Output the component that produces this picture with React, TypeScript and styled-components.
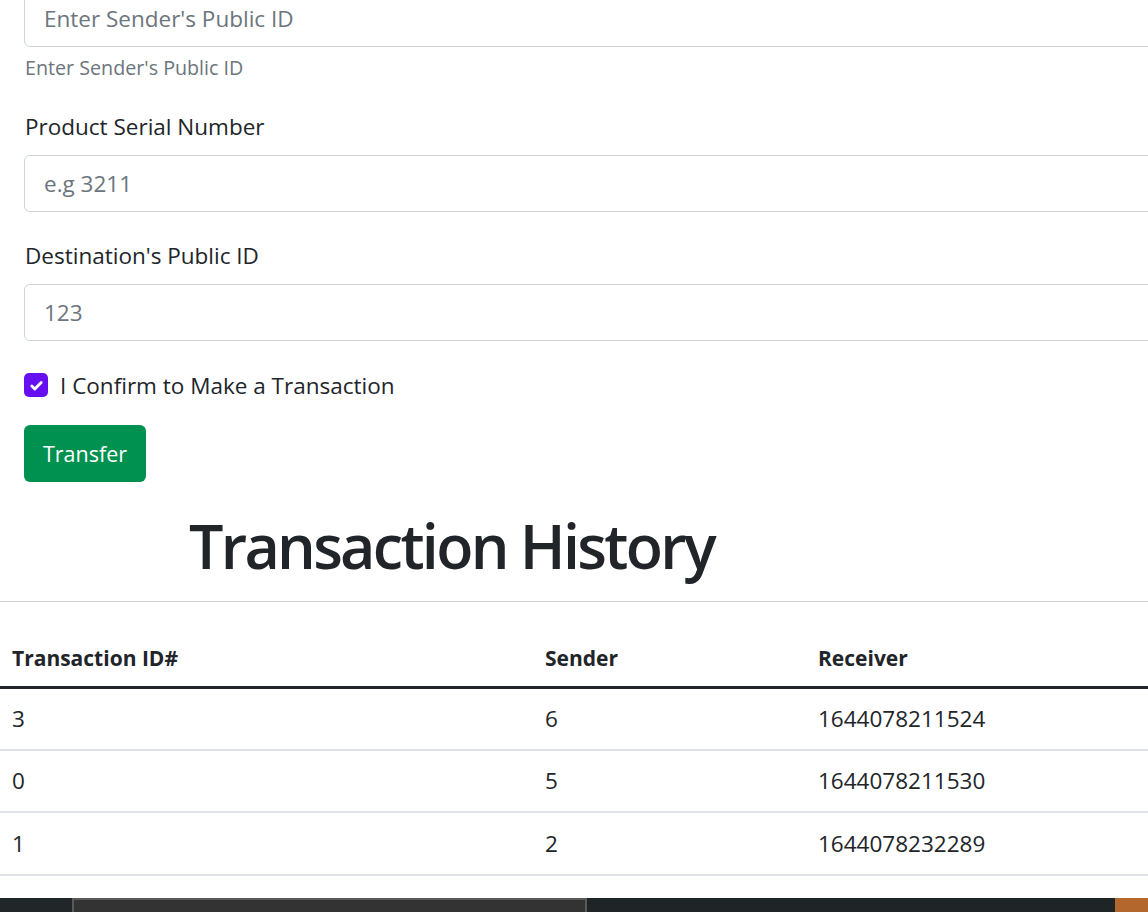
import React from "react";
import styled, { createGlobalStyle } from "styled-components";

const GlobalStyle = createGlobalStyle`
  html, body {
    margin: 0;
    padding: 0;
    background: #ffffff;
    overflow: hidden;
  }
  body {
    font-family: "Open Sans", "Noto Sans", sans-serif;
    color: #212529;
  }
  * { box-sizing: border-box; }
`;

const Page = styled.div`
  width: 1148px;
  height: 912px;
  overflow: hidden;
  display: flex;
  flex-direction: column;
`;

const Content = styled.div`
  flex: 1;
  display: flex;
  flex-direction: column;
  margin-top: -10px;
`;

const Form = styled.form`
  display: flex;
  flex-direction: column;
  padding-left: 24px;
  width: 1400px;
`;

const Group = styled.div<{ $gapTop?: number }>`
  display: flex;
  flex-direction: column;
  margin-top: ${(p) => p.$gapTop ?? 0}px;
`;

const Label = styled.label`
  display: block;
  height: 30px;
  line-height: 30px;
  font-size: 22.5px;
  padding-left: 1px;
  margin-bottom: 13px;
  color: #212529;
`;

const Input = styled.input`
  height: 57px;
  width: 100%;
  border: 1px solid #ced4da;
  border-radius: 6px;
  padding: 0 19px;
  font-family: inherit;
  font-size: 22.5px;
  color: #212529;
  background: #fff;
  outline: none;
  &::placeholder {
    color: #6c757d;
    opacity: 1;
  }
`;

const Help = styled.div`
  margin-top: 8px;
  height: 26px;
  line-height: 26px;
  font-size: 19.7px;
  color: #6c757d;
  padding-left: 1px;
`;

const CheckRow = styled.label`
  display: flex;
  align-items: center;
  gap: 12px;
  height: 30px;
  margin-top: 29px;
  font-size: 22.5px;
  color: #212529;
`;

const CheckBox = styled.span`
  width: 24px;
  height: 24px;
  border-radius: 5px;
  background: #6610f2;
  display: flex;
  align-items: center;
  justify-content: center;
  flex: none;
`;

const Button = styled.button`
  margin-top: 25px;
  width: 122px;
  height: 57px;
  border: none;
  border-radius: 6px;
  background: #009150;
  color: #ffffff;
  font-family: inherit;
  font-size: 21.5px;
  padding: 0;
  align-self: flex-start;
`;

const Title = styled.h1`
  margin: 28px 0 0;
  padding-left: 189px;
  font-size: 61px;
  font-weight: 600;
  letter-spacing: -2.7px;
  line-height: 72px;
  color: #212529;
  height: 72px;
  white-space: nowrap;
`;

const Rule = styled.hr`
  margin: 19px 0 0;
  border: none;
  border-top: 1px solid #cfcfcf;
  width: 100%;
`;

const Table = styled.table`
  margin-top: 29px;
  width: 1400px;
  border-collapse: collapse;
  table-layout: fixed;
  font-size: 22.5px;
`;

const Th = styled.th<{ $w?: number }>`
  text-align: left;
  font-weight: 700;
  font-size: 21px;
  padding: 0 12px;
  height: 56px;
  width: ${(p) => (p.$w ? `${p.$w}px` : "auto")};
  border-bottom: 3px solid #212529;
  color: #212529;
`;

const Td = styled.td`
  padding: 0 12px;
  height: 62.5px;
  border-bottom: 2px solid #dee2e6;
  color: #212529;
`;

const Taskbar = styled.div`
  height: 14px;
  display: flex;
  flex: none;
`;

const Segment = styled.div<{ $w?: number; $bg: string; $edge?: boolean }>`
  width: ${(p) => (p.$w ? `${p.$w}px` : "auto")};
  flex: ${(p) => (p.$w ? "none" : "1")};
  background: ${(p) => p.$bg};
  ${(p) =>
    p.$edge
      ? "border-top: 2px solid #5a5a5a; border-left: 2px solid #5a5a5a; border-right: 2px solid #5a5a5a;"
      : ""}
`;

const rows = [
  { id: "3", sender: "6", receiver: "1644078211524" },
  { id: "0", sender: "5", receiver: "1644078211530" },
  { id: "1", sender: "2", receiver: "1644078232289" },
];

export default function App() {
  return (
    <Page>
      <GlobalStyle />
      <Content>
        <Form onSubmit={(e) => e.preventDefault()}>
          <Group>
            <Input placeholder="Enter Sender's Public ID" />
            <Help>Enter Sender's Public ID</Help>
          </Group>
          <Group $gapTop={31}>
            <Label>Product Serial Number</Label>
            <Input placeholder="e.g 3211" />
          </Group>
          <Group $gapTop={29}>
            <Label>Destination's Public ID</Label>
            <Input placeholder="123" />
          </Group>
          <CheckRow>
            <CheckBox>
              <svg width="17" height="17" viewBox="0 0 20 20">
                <path
                  d="M4.5 10.5l3.5 3.5 7.5-7.5"
                  fill="none"
                  stroke="#fff"
                  strokeWidth="3.4"
                  strokeLinecap="round"
                  strokeLinejoin="round"
                />
              </svg>
            </CheckBox>
            I Confirm to Make a Transaction
          </CheckRow>
          <Button type="submit">Transfer</Button>
        </Form>
        <Title>Transaction History</Title>
        <Rule />
        <Table>
          <thead>
            <tr>
              <Th $w={533}>Transaction ID#</Th>
              <Th $w={273}>Sender</Th>
              <Th>Receiver</Th>
            </tr>
          </thead>
          <tbody>
            {rows.map((r) => (
              <tr key={r.id}>
                <Td>{r.id}</Td>
                <Td>{r.sender}</Td>
                <Td>{r.receiver}</Td>
              </tr>
            ))}
          </tbody>
        </Table>
      </Content>
      <Taskbar>
        <Segment $w={72} $bg="#212628" />
        <Segment $w={515} $bg="#333333" $edge />
        <Segment $bg="#1f2427" />
        <Segment $w={33} $bg="#b4672c" />
      </Taskbar>
    </Page>
  );
}
